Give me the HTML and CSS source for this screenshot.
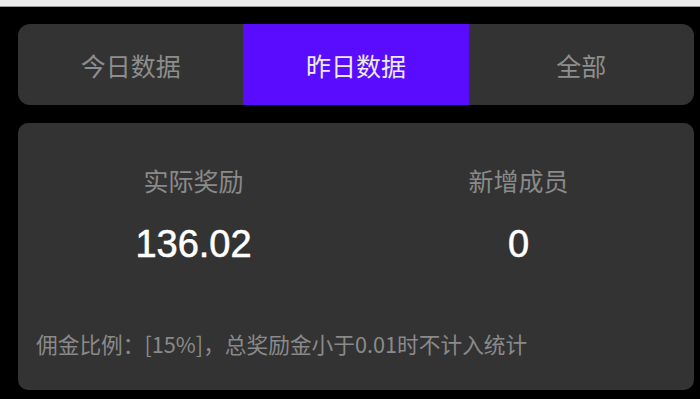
FILE: index.html
```html
<!DOCTYPE html>
<html>
<head>
    <title>数据统计</title>
    <link rel="stylesheet" href="styles.css">
</head>
<body>
    <div class="top-strip"></div>
    <div class="page">
        <div class="tabs">
            <div class="tab">今日数据</div>
            <div class="tab active">昨日数据</div>
            <div class="tab">全部</div>
        </div>

        <div class="card">
            <div class="stats">
                <div class="stat">
                    <div class="stat-label">实际奖励</div>
                    <div class="stat-value">136.02</div>
                </div>
                <div class="stat">
                    <div class="stat-label">新增成员</div>
                    <div class="stat-value">0</div>
                </div>
            </div>
            <div class="note">佣金比例：[15%]，总奖励金小于0.01时不计入统计</div>
        </div>
    </div>
</body>
</html>
```

FILE: styles.css
```css
body {
    margin: 0;
    background-color: #000;
    font-family: "Noto Sans CJK SC", "Noto Sans", sans-serif;
}
.top-strip {
    height: 6px;
    background-color: #ececec;
    border-bottom: 1px solid #9c9c9c;
}
.page {
    padding: 17px 6px 0 18px;
}
.tabs {
    display: flex;
    height: 81px;
    background-color: #333;
    border-radius: 12px;
    overflow: hidden;
}
.tab {
    flex: 1;
    display: flex;
    align-items: center;
    justify-content: center;
    font-size: 25px;
    color: #8e8e8e;
}
.tab.active {
    background-color: #5a0cff;
    color: #ececec;
}
.card {
    margin-top: 18px;
    height: 267px;
    box-sizing: border-box;
    padding: 40px 13px 0;
    background-color: #333;
    border-radius: 10px;
}
.stats {
    display: grid;
    grid-template-columns: 1fr 1fr;
}
.stat {
    text-align: center;
}
.stat-label {
    font-size: 25px;
    line-height: 34px;
    color: #8a8a8a;
}
.stat-value {
    margin-top: 23px;
    font-family: "Liberation Sans", Arial, sans-serif;
    font-size: 38px;
    line-height: 48px;
    color: #fff;
    -webkit-text-stroke: 0.6px #fff;
}
.note {
    margin-top: 61px;
    padding-left: 5px;
    font-size: 21.7px;
    line-height: 30px;
    color: #8a8a8a;
}
```
